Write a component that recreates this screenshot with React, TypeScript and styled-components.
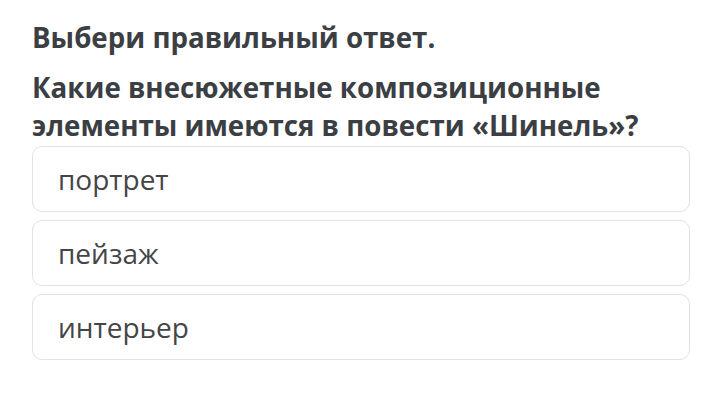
import React from 'react';
import styled, { createGlobalStyle } from 'styled-components';

const GlobalStyle = createGlobalStyle`
  body {
    margin: 0;
    background: #ffffff;
    font-family: "Open Sans", "Liberation Sans", sans-serif;
  }
`;

const options = ['портрет', 'пейзаж', 'интерьер'];

const App: React.FC = () => {
  return (
    <Page>
      <GlobalStyle />
      <Instruction>Выбери правильный ответ.</Instruction>
      <Question>
        Какие внесюжетные композиционные элементы имеются в повести «Шинель»?
      </Question>
      <OptionList>
        {options.map((o) => (
          <Option key={o}>{o}</Option>
        ))}
      </OptionList>
    </Page>
  );
};

export default App;

const Page = styled.div`
  width: 720px;
  height: 410px;
  box-sizing: border-box;
  padding: 18px 30px 0 32px;
`;

const Instruction = styled.div`
  font-size: 27.7px;
  font-weight: 700;
  color: #3b3e43;
  line-height: 38px;
  margin-bottom: 12px;
`;

const Question = styled.div`
  font-size: 27.7px;
  font-weight: 700;
  color: #3b3e43;
  line-height: 38px;
  width: 640px;
  margin-bottom: 2px;
`;

const OptionList = styled.div`
  display: flex;
  flex-direction: column;
  gap: 8px;
`;

const Option = styled.div`
  height: 66px;
  box-sizing: border-box;
  border: 1px solid #e2e2e2;
  border-radius: 10px;
  padding: 0 25px;
  display: flex;
  align-items: center;
  font-size: 28px;
  color: #444548;
`;
